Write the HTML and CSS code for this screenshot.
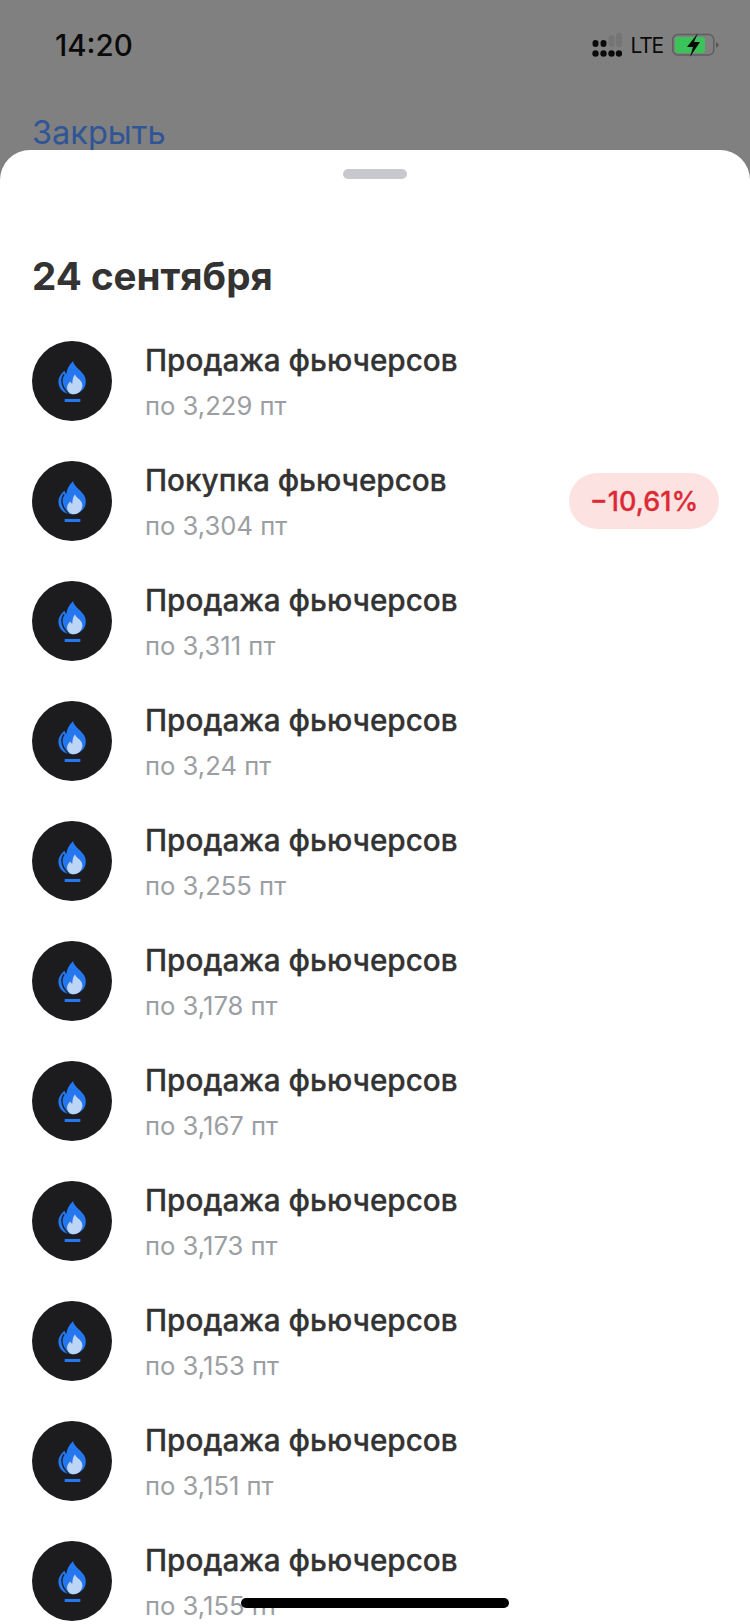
FILE: index.html
```html
<!DOCTYPE html>
<html lang="ru">
<head>
  <meta charset="UTF-8" />
  <title>Операции</title>
  <link rel="stylesheet" href="styles.css">
</head>
<body>
  <svg class="defs" width="0" height="0">
    <symbol id="flame" viewBox="0 0 24 40" preserveAspectRatio="none">
      <path fill="#2477ee" d="M12.500 0C13 5 18 8 21 13C24 18 23.500 24 20.500 28C18 31 15 32.500 12 32.500C7 32.500 2.500 30 .8 24C-.6 18.500 1.500 13 5.500 9.500C5.700 11 6.200 12 7 12.800C7.200 8 9.500 3.500 12.500 0z"/>
      <path fill="none" stroke="#1c1c1e" stroke-width="1.100" d="M5 13C1.800 18 3 26 9 32"/>
      <path fill="#bcd4f6" d="M14 13C14.500 16 19 18 20 22C20.800 27 18 32 13.500 32.500C10 32.500 7.500 29.500 7.500 26C7.500 23.500 8.800 21 10.500 20C10.700 21.200 11 21.800 11.800 22.300C11.800 19 12.500 15.500 14 13z"/>
      <rect fill="#2477ee" x="5.500" y="37" width="13" height="3"/>
    </symbol>
  </svg>

  <header class="top">
    <div class="status">
      <span class="time">14:20</span>
      <div class="status-right">
        <svg class="signal" width="30" height="24" viewBox="0 0 30 24">
          <g fill="#0a0a0a">
            <circle cx="3.500" cy="20.500" r="3.200"/><circle cx="11.500" cy="20.500" r="3.200"/><circle cx="19.500" cy="20.500" r="3.200"/><circle cx="27" cy="20.500" r="3.200"/>
            <rect x=".5" y="7" width="6" height="7" rx="3"/><rect x="8.500" y="7" width="6" height="7" rx="3"/>
          </g>
          <g fill="#757575">
            <rect x="16.500" y="2" width="6" height="12" rx="3"/><rect x="24" y="0" width="6" height="14" rx="3"/>
          </g>
        </svg>
        <span class="lte">LTE</span>
        <svg class="battery" width="48" height="24" viewBox="0 0 48 24">
          <rect x=".75" y="1.500" width="41" height="20.500" rx="5" fill="none" stroke="#5e5e5e" stroke-width="1.500"/>
          <rect x="3" y="4" width="30" height="16" rx="3" fill="#3cc25a"/>
          <path d="M44 9l3 3-3 3z" fill="#555"/>
          <path d="M26 0L15 14h6l-3 10 10-15h-6z" fill="#0a0a0a"/>
        </svg>
      </div>
    </div>
    <a class="close-link">Закрыть</a>
  </header>

  <main class="sheet">
    <div class="handle"></div>
    <h1 class="day">24 сентября</h1>
    <div class="list">
      <div class="row">
        <div class="avatar"><svg width="29" height="41"><use href="#flame"/></svg></div>
        <div class="info"><div class="name">Продажа фьючерсов</div><div class="price">по 3,229 пт</div></div>
      </div>
      <div class="row">
        <div class="avatar"><svg width="29" height="41"><use href="#flame"/></svg></div>
        <div class="info"><div class="name">Покупка фьючерсов</div><div class="price">по 3,304 пт</div></div>
        <div class="badge">−10,61%</div>
      </div>
      <div class="row">
        <div class="avatar"><svg width="29" height="41"><use href="#flame"/></svg></div>
        <div class="info"><div class="name">Продажа фьючерсов</div><div class="price">по 3,311 пт</div></div>
      </div>
      <div class="row">
        <div class="avatar"><svg width="29" height="41"><use href="#flame"/></svg></div>
        <div class="info"><div class="name">Продажа фьючерсов</div><div class="price">по 3,24 пт</div></div>
      </div>
      <div class="row">
        <div class="avatar"><svg width="29" height="41"><use href="#flame"/></svg></div>
        <div class="info"><div class="name">Продажа фьючерсов</div><div class="price">по 3,255 пт</div></div>
      </div>
      <div class="row">
        <div class="avatar"><svg width="29" height="41"><use href="#flame"/></svg></div>
        <div class="info"><div class="name">Продажа фьючерсов</div><div class="price">по 3,178 пт</div></div>
      </div>
      <div class="row">
        <div class="avatar"><svg width="29" height="41"><use href="#flame"/></svg></div>
        <div class="info"><div class="name">Продажа фьючерсов</div><div class="price">по 3,167 пт</div></div>
      </div>
      <div class="row">
        <div class="avatar"><svg width="29" height="41"><use href="#flame"/></svg></div>
        <div class="info"><div class="name">Продажа фьючерсов</div><div class="price">по 3,173 пт</div></div>
      </div>
      <div class="row">
        <div class="avatar"><svg width="29" height="41"><use href="#flame"/></svg></div>
        <div class="info"><div class="name">Продажа фьючерсов</div><div class="price">по 3,153 пт</div></div>
      </div>
      <div class="row">
        <div class="avatar"><svg width="29" height="41"><use href="#flame"/></svg></div>
        <div class="info"><div class="name">Продажа фьючерсов</div><div class="price">по 3,151 пт</div></div>
      </div>
      <div class="row">
        <div class="avatar"><svg width="29" height="41"><use href="#flame"/></svg></div>
        <div class="info"><div class="name">Продажа фьючерсов</div><div class="price">по 3,155 пт</div></div>
      </div>
    </div>
  </main>

  <div class="home-bar"></div>
</body>
</html>
```

FILE: styles.css
```css
* {
  box-sizing: border-box;
}

body {
  margin: 0;
  width: 750px;
  height: 1624px;
  overflow: hidden;
  position: relative;
  display: flex;
  flex-direction: column;
  background: #808080;
  font-family: Inter, "Noto Sans", sans-serif;
  color: #333333;
}

.defs {
  position: absolute;
}

.top {
  height: 150px;
  flex-shrink: 0;
  padding: 24px 32px 0;
}

.status {
  height: 42px;
  display: flex;
  align-items: center;
  justify-content: space-between;
  padding-left: 23px;
}

.time {
  font-size: 29.5px;
  font-weight: 500;
  color: #0a0a0a;
}

.status-right {
  display: flex;
  align-items: center;
  gap: 9px;
  margin-right: -2px;
}

.lte {
  font-size: 21px;
  letter-spacing: -1.2px;
  color: #0a0a0a;
}

.close-link {
  display: block;
  margin-top: 50px;
  font-size: 32.5px;
  line-height: 34px;
  color: #2f5597;
}

.sheet {
  position: relative;
  flex: 1;
  overflow: hidden;
  background: #fff;
  border-radius: 30px 30px 0 0;
  padding: 19px 32px 0;
}

.handle {
  width: 64px;
  height: 10px;
  margin: 0 auto;
  border-radius: 5px;
  background: #c7c9ce;
}

.day {
  margin: 74px 0 0;
  font-size: 38.6px;
  line-height: 46px;
  font-weight: 700;
  color: #333333;
}

.list {
  margin-top: 42px;
  display: flex;
  flex-direction: column;
  gap: 40px;
}

.row {
  height: 80px;
  flex-shrink: 0;
  display: flex;
  align-items: center;
}

.avatar {
  width: 80px;
  height: 80px;
  flex-shrink: 0;
  border-radius: 50%;
  background: #1c1c1e;
  display: flex;
  align-items: center;
  justify-content: center;
}

.info {
  margin-left: 33px;
  padding-top: 2px;
}

.name {
  font-size: 29.7px;
  line-height: 36px;
  font-weight: 500;
  -webkit-text-stroke: 0.3px #333333;
  color: #333333;
}

.price {
  margin-top: 12px;
  font-size: 25.6px;
  line-height: 32px;
  color: #9b9ea3;
}

.badge {
  margin-left: auto;
  margin-right: -1px;
  width: 150px;
  height: 56px;
  border-radius: 28px;
  background: #fde2e2;
  color: #dc2a35;
  font-size: 27px;
  font-weight: 500;
  -webkit-text-stroke: 0.3px #dc2a35;
  display: flex;
  align-items: center;
  justify-content: center;
}

.home-bar {
  position: absolute;
  left: 241px;
  top: 1598px;
  width: 268px;
  height: 10px;
  border-radius: 5px;
  background: #000;
}
```
